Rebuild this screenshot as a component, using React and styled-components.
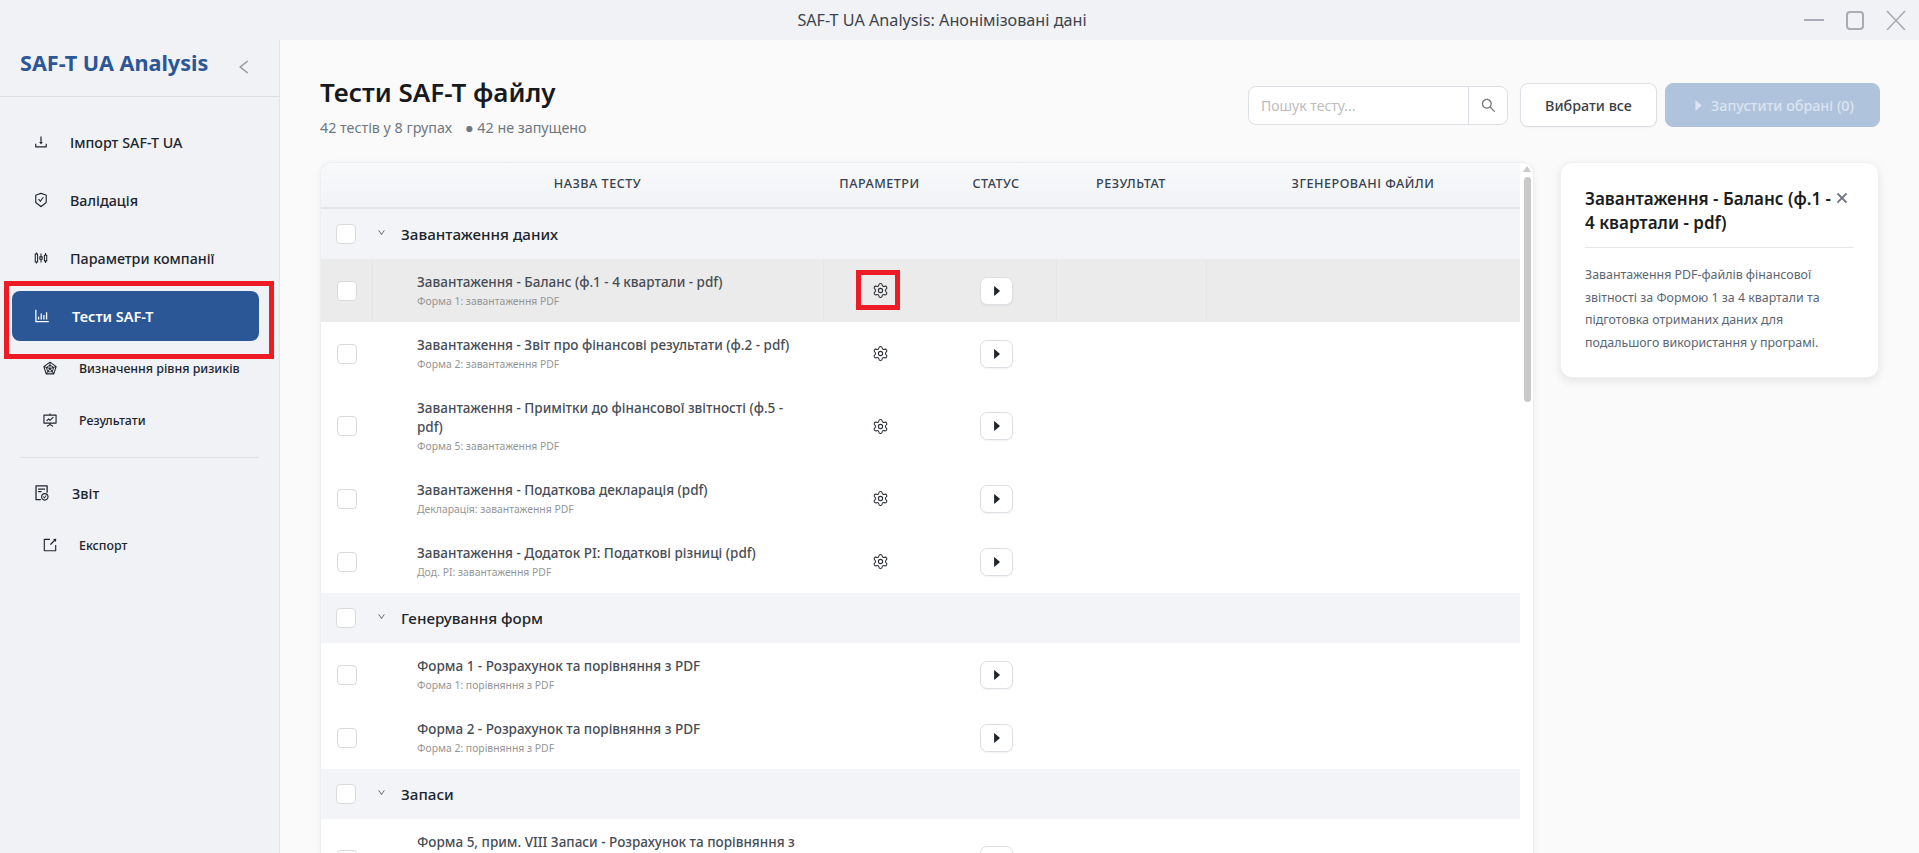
import React from 'react'
import styled, { createGlobalStyle } from 'styled-components'
import { Settings } from 'lucide-react'
import {
  AiOutlineBarChart,
  AiOutlineCaretRight,
  AiOutlineClose,
  AiOutlineDown,
  AiOutlineDownload,
  AiOutlineExport,
  AiOutlineFileDone,
  AiOutlineFundProjectionScreen,
  AiOutlineLeft,
  AiOutlineRadarChart,
  AiOutlineSafetyCertificate,
  AiOutlineSearch,
  AiOutlineSliders,
} from 'react-icons/ai'

const GlobalStyle = createGlobalStyle`
    html, body {
        margin: 0;
        height: 100%;
        overflow: hidden;
    }
    body {
        font-family: "Noto Sans", "Liberation Sans", sans-serif;
        background: #fafafa;
    }
    * {
        box-sizing: border-box;
    }
`

const ANNOTATION = '#ed1c24'
const COLUMNS = '51px 451px 113px 120px 150px 1fr'

const Window = styled.div`
    height: 100vh;
    display: flex;
    flex-direction: column;
    overflow: hidden;
`
const TitleBar = styled.div`
    flex: 0 0 40px;
    padding-right: 35px;
    background: #f0f2f6;
    position: relative;
    display: flex;
    align-items: center;
    justify-content: center;
    font-size: 16.2px;
    color: #3d444d;
`
const WindowControls = styled.div`
    position: absolute;
    top: 0;
    right: 13px;
    height: 40px;
    display: flex;
    align-items: center;
    gap: 21px;
`
const Body = styled.div`
    flex: 1;
    min-height: 0;
    display: flex;
`
const Sidebar = styled.aside`
    flex: 0 0 280px;
    background: #f0f2f6;
    border-right: 1px solid #e2e4e8;
`
const Brand = styled.div`
    height: 57px;
    padding: 0 27px 0 20px;
    border-bottom: 1px solid #dcdee2;
    margin-right: -1px;
    display: flex;
    align-items: center;
    justify-content: space-between;
`
const BrandName = styled.div`
    font-size: 21.6px;
    font-weight: 700;
    color: #2b5797;
    margin-top: -12px;
`
const Collapse = styled.span`
    display: flex;
    font-size: 18px;
    color: #9a9a9a;
    margin-top: -2px;
`
const Nav = styled.nav`
    padding: 16px 20px 0 12px;
`
const NavItem = styled.div`
    height: ${p => (p.$sub || p.$report ? 52 : 58)}px;
    padding-left: ${p => (p.$sub ? 30 : 21)}px;
    display: flex;
    align-items: center;
    gap: 21px;
    font-size: ${p => (p.$sub ? 12.4 : 14.3)}px;
    font-weight: 500;
    color: #20252c;
`
const ActiveItem = styled.div`
    height: 50px;
    margin: 4px 0 1px;
    padding-left: 21px;
    background: #2b5797;
    border-radius: 8px;
    position: relative;
    display: flex;
    align-items: center;
    gap: 21px;
    font-size: 14.5px;
    font-weight: 600;
    color: #fff;

    &::after {
        content: '';
        position: absolute;
        inset: -10px -15px -18px -8px;
        border: 5px solid ${ANNOTATION};
    }
`
const NavIcon = styled.span`
    display: flex;
    font-size: ${p => p.$size || 16}px;
`
const NavDivider = styled.div`
    height: 1px;
    background: #dfe1e5;
    margin: 11px 0 9px 8px;
`
const Main = styled.main`
    flex: 1;
    min-width: 0;
    padding: 30px 40px 0;
    display: flex;
    flex-direction: column;
    background: #fafafa;
`
const PageHeader = styled.header`
    flex: 0 0 92px;
    display: flex;
    justify-content: space-between;
    align-items: flex-start;
`
const PageTitle = styled.h1`
    margin: 0;
    font-size: 26px;
    line-height: 44px;
    font-weight: 600;
    color: #16191d;
`
const PageMeta = styled.div`
    display: flex;
    gap: 13px;
    font-size: 14.3px;
    line-height: 20px;
    margin-top: 4px;
    color: #6f7781;
`
const Actions = styled.div`
    display: flex;
    align-items: center;
    gap: 8px;
    margin: 13px -1px 0 0;
`
const Search = styled.div`
    display: flex;
    height: 39px;
    margin-right: 4px;
`
const SearchField = styled.div`
    width: 221px;
    padding-left: 12px;
    display: flex;
    align-items: center;
    background: #fff;
    border: 1px solid #dcdfe3;
    border-radius: 8px 0 0 8px;
    font-size: 14px;
    color: #bcbcbc;
`
const SearchButton = styled.div`
    width: 40px;
    margin-left: -1px;
    display: flex;
    align-items: center;
    justify-content: center;
    background: #fff;
    border: 1px solid #dcdfe3;
    border-radius: 0 8px 8px 0;
    font-size: 17px;
    color: #777;
`
const Button = styled.button`
    height: 44px;
    width: ${p => (p.$primary ? 215 : 137)}px;
    margin: 0;
    padding: 0;
    display: flex;
    align-items: center;
    justify-content: center;
    gap: 5px;
    font: 500 14.3px "Noto Sans", sans-serif;
    border-radius: 8px;
    border: 1px solid ${p => (p.$primary ? '#b0c3dd' : '#dcdfe3')};
    background: ${p => (p.$primary ? '#b0c3dd' : '#fff')};
    color: ${p => (p.$primary ? '#dbe4f0' : '#3a3f45')};
    box-shadow: ${p => (p.$primary ? 'none' : '0 1px 2px rgba(0, 0, 0, 0.04)')};
`
const Content = styled.div`
    flex: 1;
    min-height: 0;
    display: flex;
    align-items: flex-start;
    gap: 26px;
`
const TableCard = styled.section`
    flex: 1;
    min-width: 0;
    height: 100%;
    display: flex;
    background: #fff;
    border: 1px solid #eceef1;
    border-bottom: 0;
    border-radius: 12px 12px 0 0;
    box-shadow: 0 2px 8px rgba(0, 0, 0, 0.05);
    overflow: hidden;
`
const TableBody = styled.div`
    flex: 1;
    min-width: 0;
    overflow: hidden;
`
const ScrollRail = styled.div`
    flex: 0 0 12px;
    padding: 3px 2px 0 3px;
    display: flex;
    flex-direction: column;
    align-items: center;
    background: #fff;
`
const ScrollArrow = styled.span`
    width: 0;
    height: 0;
    border-left: 4px solid transparent;
    border-right: 4px solid transparent;
    border-bottom: 6px solid #c9c9c9;
`
const ScrollThumb = styled.div`
    width: 7px;
    height: 225px;
    margin-top: 5px;
    background: #c9c9c9;
    border-radius: 4px;
`
const HeadRow = styled.div`
    height: 46px;
    padding-bottom: 4px;
    display: grid;
    grid-template-columns: ${COLUMNS};
    align-items: center;
    background: linear-gradient(#f8f9fb, #f1f3f6);
    border-bottom: 2px solid #e3e5ea;
`
const HeadCell = styled.div`
    grid-column: ${p => p.$column};
    text-align: center;
    font-size: 12.6px;
    font-weight: 500;
    letter-spacing: 0.5px;
    text-transform: uppercase;
    color: #37424f;
`
const GroupRow = styled.div`
    height: 50px;
    display: flex;
    align-items: center;
    padding-left: 15px;
    background: #f3f4f7;
    font-size: 15.2px;
    font-weight: 500;
    color: #20252c;
`
const GroupChevron = styled.span`
    display: flex;
    margin: -4px 15px 0 21px;
    font-size: 9px;
    color: #555;
`
const TestRow = styled.div`
    height: ${p => (p.$tall ? 82 : 63)}px;
    display: grid;
    grid-template-columns: ${COLUMNS};
    background: ${p => (p.$selected ? '#ebebeb' : '#fff')};
`
const Cell = styled.div`
    display: flex;
    align-items: center;
    justify-content: ${p => (p.$center ? 'center' : 'flex-start')};
    border-left: 1px solid ${p => (p.$divider ? '#e6e6e6' : 'transparent')};
`
const Checkbox = styled.span`
    display: block;
    flex: none;
    width: 20px;
    height: 20px;
    margin-left: ${p => (p.$flush ? 0 : 15)}px;
    background: #fff;
    border: 1px solid #dadada;
    border-radius: 4px;
`
const TestName = styled.div`
    padding: 0 16px 0 44px;
`
const TestTitle = styled.div`
    font-size: 13.5px;
    line-height: 18.5px;
    font-weight: 500;
    color: #474d55;
`
const TestHint = styled.div`
    font-size: 10.4px;
    line-height: 14px;
    margin-top: 3px;
    color: #959595;
`
const GearWrap = styled.span`
    position: relative;
    display: flex;
    color: #2a2e33;

    ${p => p.$marked && `
        &::after {
            content: '';
            position: absolute;
            inset: -12px -11px -11px -16px;
            border: 5px solid ${ANNOTATION};
        }
    `}
`
const PlayButton = styled.button`
    width: 33px;
    height: 28px;
    margin: 0;
    padding: 0;
    display: flex;
    align-items: center;
    justify-content: center;
    background: #fff;
    border: 1px solid #dcdfe3;
    border-radius: 7px;
    font-size: 14px;
    color: #22262b;
    box-shadow: 0 1px 2px rgba(0, 0, 0, 0.05);
`
const DetailsCard = styled.aside`
    flex: 0 0 318px;
    height: 216px;
    padding: 24px;
    background: #fff;
    border: 1px solid #eef0f2;
    border-radius: 12px;
    box-shadow: 0 3px 10px rgba(0, 0, 0, 0.09);
`
const DetailsHead = styled.div`
    display: flex;
    justify-content: space-between;
    align-items: flex-start;
    padding-bottom: 12px;
    border-bottom: 1px solid #e6e8ec;
`
const DetailsTitle = styled.h3`
    margin: 0;
    width: 250px;
    font-size: 17px;
    line-height: 24px;
    font-weight: 600;
    color: #1a1d21;
`
const DetailsClose = styled.span`
    display: flex;
    margin: 4px 5px 0 0;
    font-size: 14px;
    color: #6f7781;

    svg {
        stroke: currentColor;
        stroke-width: 70;
    }
`
const DetailsText = styled.p`
    margin: 16px 0 0;
    font-size: 12.4px;
    line-height: 22.6px;
    color: #5c6672;
`

const MinimizeIcon = () => (
  <svg width="20" height="20" viewBox="0 0 20 20" fill="none" stroke="#a9adb3" strokeWidth="2">
    <path d="M0 10h20" />
  </svg>
)
const MaximizeIcon = () => (
  <svg width="20" height="20" viewBox="0 0 20 20" fill="none" stroke="#a9adb3" strokeWidth="2">
    <rect x="2" y="2" width="16" height="17" rx="3" />
  </svg>
)
const CloseIcon = () => (
  <svg width="20" height="20" viewBox="0 0 20 20" fill="none" stroke="#a9adb3" strokeWidth="1.6">
    <path d="M1 1l18 19M19 1L1 20" />
  </svg>
)

const groups = [
  {
    title: 'Завантаження даних',
    tests: [
      { title: 'Завантаження - Баланс (ф.1 - 4 квартали - pdf)', hint: 'Форма 1: завантаження PDF', gear: true, selected: true },
      { title: 'Завантаження - Звіт про фінансові результати (ф.2 - pdf)', hint: 'Форма 2: завантаження PDF', gear: true },
      { title: 'Завантаження - Примітки до фінансової звітності (ф.5 - pdf)', hint: 'Форма 5: завантаження PDF', gear: true, tall: true },
      { title: 'Завантаження - Податкова декларація (pdf)', hint: 'Декларація: завантаження PDF', gear: true },
      { title: 'Завантаження - Додаток PI: Податкові різниці (pdf)', hint: 'Дод. PI: завантаження PDF', gear: true },
    ],
  },
  {
    title: 'Генерування форм',
    tests: [
      { title: 'Форма 1 - Розрахунок та порівняння з PDF', hint: 'Форма 1: порівняння з PDF' },
      { title: 'Форма 2 - Розрахунок та порівняння з PDF', hint: 'Форма 2: порівняння з PDF' },
    ],
  },
  {
    title: 'Запаси',
    tests: [
      { title: 'Форма 5, прим. VIII Запаси - Розрахунок та порівняння з PDF', hint: 'Форма 5: запаси', tall: true },
    ],
  },
]

const columns = [
  ['Назва тесту', 2],
  ['Параметри', 3],
  ['Статус', 4],
  ['Результат', 5],
  ['Згенеровані файли', 6],
]

const App = () => (
  <Window>
    <GlobalStyle />
    <TitleBar>
      SAF-T UA Analysis: Анонімізовані дані
      <WindowControls>
        <MinimizeIcon />
        <MaximizeIcon />
        <CloseIcon />
      </WindowControls>
    </TitleBar>
    <Body>
      <Sidebar>
        <Brand>
          <BrandName>SAF-T UA Analysis</BrandName>
          <Collapse><AiOutlineLeft /></Collapse>
        </Brand>
        <Nav>
          <NavItem><NavIcon><AiOutlineDownload /></NavIcon>Імпорт SAF-T UA</NavItem>
          <NavItem><NavIcon><AiOutlineSafetyCertificate /></NavIcon>Валідація</NavItem>
          <NavItem><NavIcon><AiOutlineSliders /></NavIcon>Параметри компанії</NavItem>
          <ActiveItem><NavIcon $size={18}><AiOutlineBarChart /></NavIcon>Тести SAF-T</ActiveItem>
          <NavItem $sub><NavIcon $size={16}><AiOutlineRadarChart /></NavIcon>Визначення рівня ризиків</NavItem>
          <NavItem $sub><NavIcon $size={16}><AiOutlineFundProjectionScreen /></NavIcon>Результати</NavItem>
          <NavDivider />
          <NavItem $report><NavIcon $size={18}><AiOutlineFileDone /></NavIcon>Звіт</NavItem>
          <NavItem $sub><NavIcon $size={16}><AiOutlineExport /></NavIcon>Експорт</NavItem>
        </Nav>
      </Sidebar>
      <Main>
        <PageHeader>
          <div>
            <PageTitle>Тести SAF-T файлу</PageTitle>
            <PageMeta>
              <span>42 тестів у 8 групах</span>
              <span>● 42 не запущено</span>
            </PageMeta>
          </div>
          <Actions>
            <Search>
              <SearchField>Пошук тесту...</SearchField>
              <SearchButton><AiOutlineSearch /></SearchButton>
            </Search>
            <Button>Вибрати все</Button>
            <Button $primary><AiOutlineCaretRight size={15} />Запустити обрані (0)</Button>
          </Actions>
        </PageHeader>
        <Content>
          <TableCard>
            <TableBody>
              <HeadRow>
                {columns.map(([label, column]) => (
                  <HeadCell key={label} $column={column}>{label}</HeadCell>
                ))}
              </HeadRow>
              {groups.map(group => (
                <React.Fragment key={group.title}>
                  <GroupRow>
                    <Checkbox $flush />
                    <GroupChevron><AiOutlineDown /></GroupChevron>
                    {group.title}
                  </GroupRow>
                  {group.tests.map(test => (
                    <TestRow key={test.title} $tall={test.tall} $selected={test.selected}>
                      <Cell><Checkbox /></Cell>
                      <Cell $divider={test.selected}>
                        <TestName>
                          <TestTitle>{test.title}</TestTitle>
                          <TestHint>{test.hint}</TestHint>
                        </TestName>
                      </Cell>
                      <Cell $center $divider={test.selected}>
                        {test.gear && (
                          <GearWrap $marked={test.selected}>
                            <Settings size={17} strokeWidth={1.5} />
                          </GearWrap>
                        )}
                      </Cell>
                      <Cell $center>
                        <PlayButton><AiOutlineCaretRight /></PlayButton>
                      </Cell>
                      <Cell $divider={test.selected} />
                      <Cell $divider={test.selected} />
                    </TestRow>
                  ))}
                </React.Fragment>
              ))}
            </TableBody>
            <ScrollRail>
              <ScrollArrow />
              <ScrollThumb />
            </ScrollRail>
          </TableCard>
          <DetailsCard>
            <DetailsHead>
              <DetailsTitle>Завантаження - Баланс (ф.1 - 4 квартали - pdf)</DetailsTitle>
              <DetailsClose><AiOutlineClose /></DetailsClose>
            </DetailsHead>
            <DetailsText>
              Завантаження PDF-файлів фінансової звітності за Формою 1 за 4 квартали та підготовка отриманих даних для подальшого використання у програмі.
            </DetailsText>
          </DetailsCard>
        </Content>
      </Main>
    </Body>
  </Window>
)

export default App
